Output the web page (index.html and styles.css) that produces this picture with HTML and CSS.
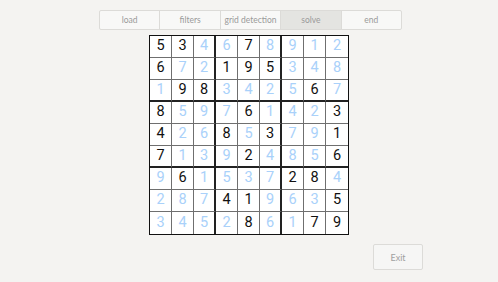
FILE: index.html
```html
<!DOCTYPE html>
<html>
<head>
<meta charset="utf-8">
<link rel="stylesheet" href="styles.css">
</head>
<body>
<div class="page">
  <nav class="tabs">
    <div class="tab">load</div>
    <div class="tab">filters</div>
    <div class="tab">grid detection</div>
    <div class="tab active">solve</div>
    <div class="tab">end</div>
  </nav>
  <div class="board" id="board"></div>
  <div class="footer"><button class="exit">Exit</button></div>
</div>
<script>
var rows = [
"534678912",
"672195348",
"198342567",
"859761423",
"426853791",
"713924856",
"961537284",
"287419635",
"345286179"];
var given = [
"110010000",
"100111000",
"011000010",
"100010001",
"100101001",
"100010001",
"010000110",
"000110001",
"000010011"];
var b = document.getElementById('board');
for (var r = 0; r < 9; r++) {
  for (var c = 0; c < 9; c++) {
    var d = document.createElement('div');
    var cls = 'cell';
    if (given[r][c] === '1') cls += ' given'; else cls += ' solved';
    if (c === 2 || c === 5) cls += ' br';
    if (c === 8) cls += ' lastc';
    if (r === 2 || r === 5) cls += ' bb';
    if (r === 8) cls += ' lastr';
    d.className = cls;
    d.textContent = rows[r][c];
    b.appendChild(d);
  }
}
</script>
</body>
</html>
```
FILE: styles.css
```css
html, body {
  margin: 0;
  padding: 0;
  background: #f4f3f1;
}
.page {
  width: 498px;
  height: 282px;
  display: flex;
  flex-direction: column;
  align-items: center;
  box-sizing: border-box;
  padding-top: 10px;
}
.tabs {
  display: flex;
  width: 303px;
  height: 20px;
  box-sizing: border-box;
  border: 1px solid #dcdbd8;
  border-radius: 2px;
  background: #f8f8f7;
  margin-left: 3px;
}
.tab {
  flex: 1;
  display: flex;
  align-items: center;
  justify-content: center;
  font-family: Lato, sans-serif;
  font-size: 8.5px;
  color: #9a9a9a;
  border-right: 1px solid #dcdbd8;
}
.tab:last-child { border-right: none; }
.tab.active { background: #e4e4e1; }
.board {
  margin-top: 5px;
  display: grid;
  grid-template-columns: repeat(9, 22px);
  grid-template-rows: repeat(9, 22px);
  border: 1px solid #111;
  background: #fff;
}
.cell {
  box-sizing: border-box;
  border-right: 1px solid #6f6f6f;
  border-bottom: 1px solid #6f6f6f;
  display: flex;
  align-items: center;
  justify-content: center;
  font-family: Roboto, sans-serif;
  font-size: 14.5px;
  line-height: 1;
}
.cell.br { border-right: 2px solid #222; }
.cell.bb { border-bottom: 2px solid #222; }
.cell.lastc { border-right: none; }
.cell.lastr { border-bottom: none; }
.given { color: #111; }
.solved { color: #a9d1fa; }
.footer {
  width: 100%;
  display: flex;
  justify-content: flex-end;
  box-sizing: border-box;
  padding-right: 75px;
  margin-top: 9px;
}
.exit {
  width: 50px;
  height: 26px;
  border: 1px solid #dcdbd8;
  border-radius: 2px;
  background: #f6f6f5;
  font-family: Lato, sans-serif;
  font-size: 9px;
  color: #a0a0a0;
  padding: 0;
}
```
